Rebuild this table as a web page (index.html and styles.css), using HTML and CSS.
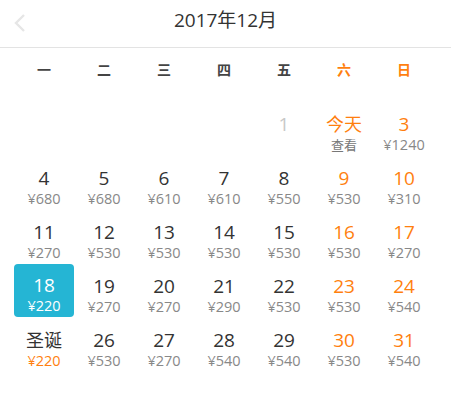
FILE: index.html
```html
<!DOCTYPE html>
<html lang="zh">
<head>
<meta charset="utf-8">
<link rel="stylesheet" href="styles.css">
</head>
<body>
<div class="cal">
  <div class="header">
    <svg class="back" width="12" height="20" viewBox="0 0 12 20"><path d="M10 2 L2 10 L10 18" fill="none" stroke="#e6e6e6" stroke-width="2.4"/></svg>
    <div class="title">2017年12月</div>
  </div>
  <div class="week">
    <span>一</span><span>二</span><span>三</span><span>四</span><span>五</span><span class="we">六</span><span class="we">日</span>
  </div>
  <div class="grid">
    <div class="cell"></div><div class="cell"></div><div class="cell"></div><div class="cell"></div>
    <div class="cell"><span class="d past">1</span></div>
    <div class="cell"><span class="d we cn">今天</span><span class="p cn">查看</span></div>
    <div class="cell"><span class="d we">3</span><span class="p">¥1240</span></div>

    <div class="cell"><span class="d">4</span><span class="p">¥680</span></div>
    <div class="cell"><span class="d">5</span><span class="p">¥680</span></div>
    <div class="cell"><span class="d">6</span><span class="p">¥610</span></div>
    <div class="cell"><span class="d">7</span><span class="p">¥610</span></div>
    <div class="cell"><span class="d">8</span><span class="p">¥550</span></div>
    <div class="cell"><span class="d we">9</span><span class="p">¥530</span></div>
    <div class="cell"><span class="d we">10</span><span class="p">¥310</span></div>

    <div class="cell"><span class="d">11</span><span class="p">¥270</span></div>
    <div class="cell"><span class="d">12</span><span class="p">¥530</span></div>
    <div class="cell"><span class="d">13</span><span class="p">¥530</span></div>
    <div class="cell"><span class="d">14</span><span class="p">¥530</span></div>
    <div class="cell"><span class="d">15</span><span class="p">¥530</span></div>
    <div class="cell"><span class="d we">16</span><span class="p">¥530</span></div>
    <div class="cell"><span class="d we">17</span><span class="p">¥270</span></div>

    <div class="cell sel"><span class="d">18</span><span class="p">¥220</span></div>
    <div class="cell"><span class="d">19</span><span class="p">¥270</span></div>
    <div class="cell"><span class="d">20</span><span class="p">¥270</span></div>
    <div class="cell"><span class="d">21</span><span class="p">¥290</span></div>
    <div class="cell"><span class="d">22</span><span class="p">¥530</span></div>
    <div class="cell"><span class="d we">23</span><span class="p">¥530</span></div>
    <div class="cell"><span class="d we">24</span><span class="p">¥540</span></div>

    <div class="cell"><span class="d cn">圣诞</span><span class="p low">¥220</span></div>
    <div class="cell"><span class="d">26</span><span class="p">¥530</span></div>
    <div class="cell"><span class="d">27</span><span class="p">¥270</span></div>
    <div class="cell"><span class="d">28</span><span class="p">¥540</span></div>
    <div class="cell"><span class="d">29</span><span class="p">¥540</span></div>
    <div class="cell"><span class="d we">30</span><span class="p">¥530</span></div>
    <div class="cell"><span class="d we">31</span><span class="p">¥540</span></div>
  </div>
</div>
</body>
</html>
```

FILE: styles.css
```css
* { box-sizing: border-box; }
html, body { margin: 0; padding: 0; background: #fff; }
body {
  font-family: "Open Sans", "Noto Sans CJK SC", sans-serif;
  color: #333;
  width: 451px;
}
.header {
  position: relative;
  height: 48px;
  border-bottom: 1px solid #e3e3e3;
  display: flex;
  align-items: center;
  justify-content: center;
}
.back {
  position: absolute;
  left: 14px;
  top: 13px;
}
.title {
  font-size: 19px;
  line-height: 26px;
  margin-top: -7px;
  color: #333;
}
.week {
  display: grid;
  grid-template-columns: repeat(7, 60px);
  padding: 0 14px;
  height: 42px;
  align-items: center;
  font-family: "Noto Sans CJK SC", sans-serif;
  font-size: 14px;
  font-weight: bold;
  color: #444;
}
.week span { text-align: center; line-height: 20px; }
.we { color: #ff7f0f; }
.grid {
  display: grid;
  grid-template-columns: repeat(7, 60px);
  grid-auto-rows: 54px;
  padding: 12px 14px 0;
}
.cell {
  display: flex;
  flex-direction: column;
  align-items: center;
  padding-top: 10px;
  height: 53px;
  border-radius: 4px;
}
.d {
  font-size: 19px;
  line-height: 25px;
  color: #333;
}
.d.we { color: #ff7f0f; }
.d.past { color: #c8c8c8; }
.d.cn { font-size: 18px; }
.p {
  font-size: 14.5px;
  line-height: 16px;
  color: #888;
}
.p.cn { font-size: 13px; color: #777; }
.p.low { color: #ff7f0f; }
.sel {
  background: #25b5d4;
  padding-top: 9px;
}
.sel .d, .sel .p { color: #fff; }
```
